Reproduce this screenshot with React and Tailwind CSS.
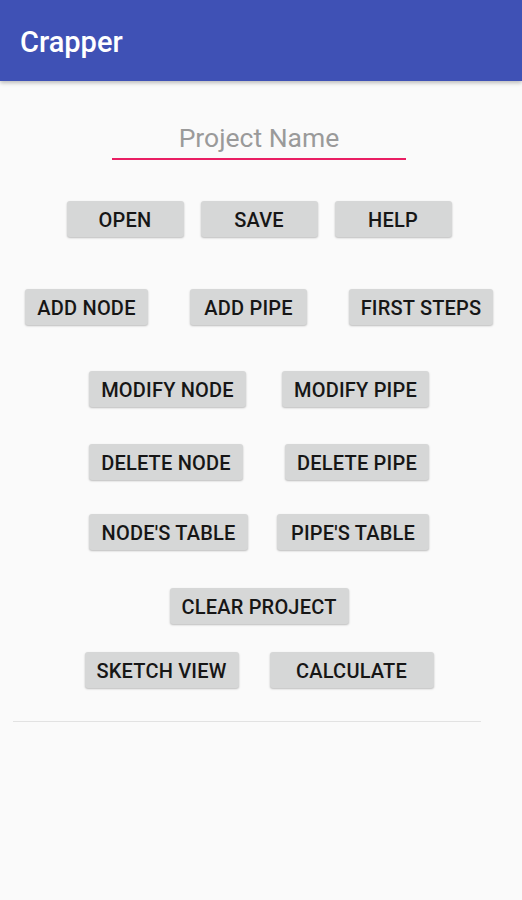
const Btn = ({ label, w }) => (
  <button
    type="button"
    className={`${w} h-[36px] pt-[3px] rounded-[3px] bg-[#d6d7d7] text-[20px] font-medium text-[#161616] shadow-[0_1px_2px_rgba(0,0,0,0.25)] tracking-[0.2px]`}
  >
    {label}
  </button>
);

export default function App() {
  return (
    <div className="w-[522px] h-[900px] bg-[#fafafa] font-['Roboto',sans-serif] overflow-hidden">
      {/* App bar */}
      <header className="h-[81px] bg-[#3f51b5] flex items-center px-[20px] pt-[4px] shadow-[0_2px_4px_rgba(0,0,0,0.25)]">
        <h1 className="text-white text-[29px] font-medium">Crapper</h1>
      </header>

      {/* Project name field */}
      <div className="mt-[35px] flex justify-center">
        <div className="w-[294px] ml-[-4px] border-b-2 border-[#e91e63] text-center pt-[2px]">
          <span className="text-[26.5px] text-[#9a9a9a]">Project Name</span>
        </div>
      </div>

      {/* Buttons */}
      <div className="flex flex-col items-center pr-[4px]">
        <div className="mt-[41px] flex gap-[17px]">
          <Btn label="OPEN" w="w-[117px]" />
          <Btn label="SAVE" w="w-[117px]" />
          <Btn label="HELP" w="w-[117px]" />
        </div>

        <div className="mt-[52px] flex gap-[42px]">
          <Btn label="ADD NODE" w="w-[123px]" />
          <Btn label="ADD PIPE" w="w-[117px]" />
          <Btn label="FIRST STEPS" w="w-[144px]" />
        </div>

        <div className="mt-[46px] flex gap-[36px]">
          <Btn label="MODIFY NODE" w="w-[157px]" />
          <Btn label="MODIFY PIPE" w="w-[147px]" />
        </div>

        <div className="mt-[37px] flex gap-[42px]">
          <Btn label="DELETE NODE" w="w-[154px]" />
          <Btn label="DELETE PIPE" w="w-[144px]" />
        </div>

        <div className="mt-[34px] flex gap-[29px]">
          <Btn label="NODE'S TABLE" w="w-[159px]" />
          <Btn label="PIPE'S TABLE" w="w-[152px]" />
        </div>

        <div className="mt-[38px] flex">
          <Btn label="CLEAR PROJECT" w="w-[179px]" />
        </div>

        <div className="mt-[28px] flex gap-[31px]">
          <Btn label="SKETCH VIEW" w="w-[154px]" />
          <Btn label="CALCULATE" w="w-[164px]" />
        </div>
      </div>

      <div className="mt-[33px] ml-[13px] w-[468px] h-px bg-[#e2e2e2]" />
    </div>
  );
}
